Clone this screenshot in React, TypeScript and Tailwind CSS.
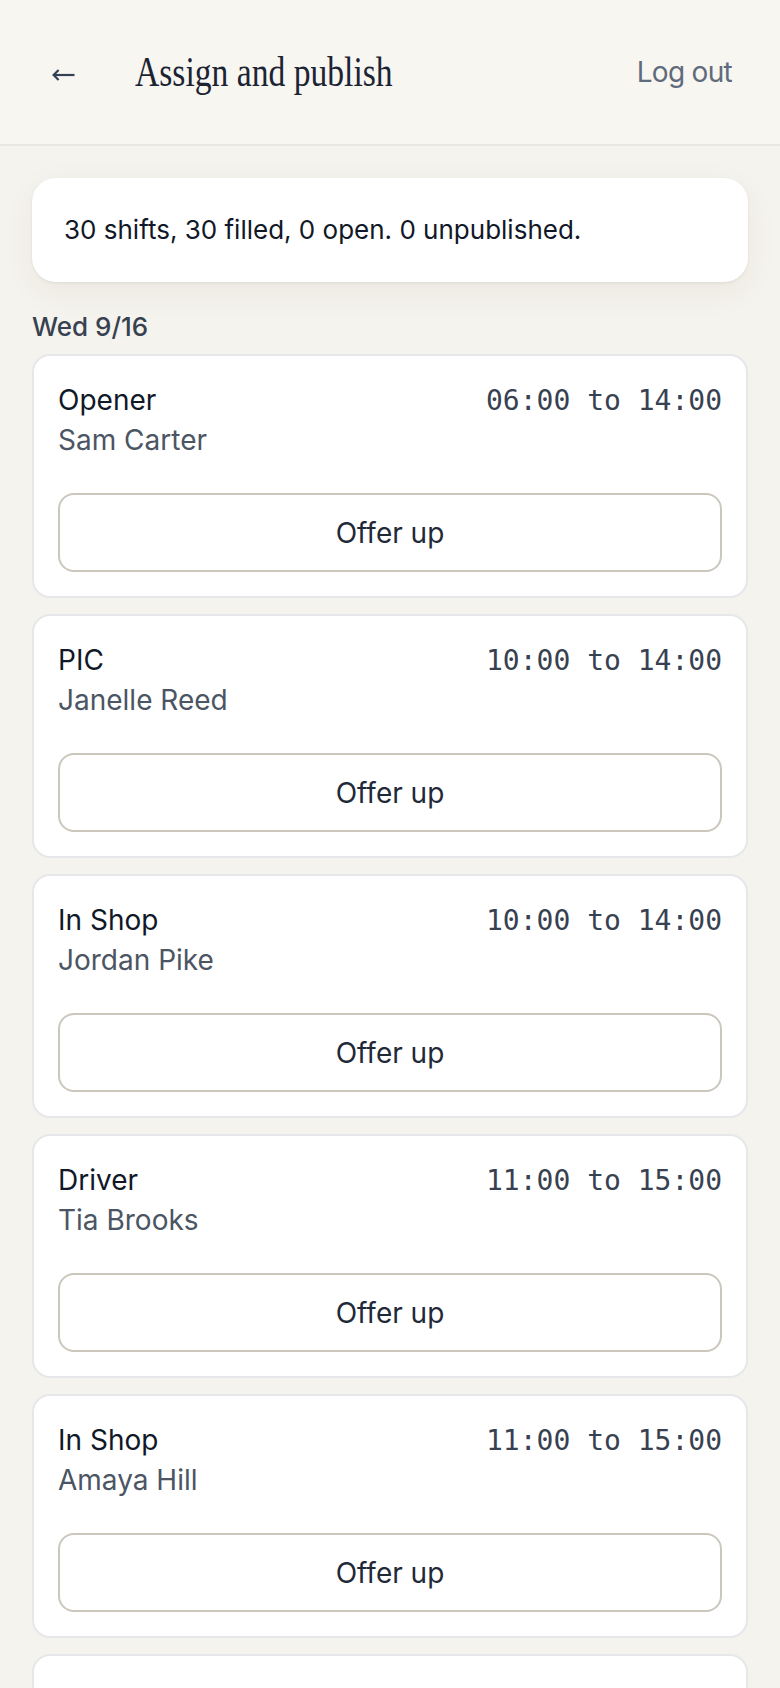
import React from "react";

type Shift = { role: string; name: string; time: string };

const shifts: Shift[] = [
  { role: "Opener", name: "Sam Carter", time: "06:00 to 14:00" },
  { role: "PIC", name: "Janelle Reed", time: "10:00 to 14:00" },
  { role: "In Shop", name: "Jordan Pike", time: "10:00 to 14:00" },
  { role: "Driver", name: "Tia Brooks", time: "11:00 to 15:00" },
  { role: "In Shop", name: "Amaya Hill", time: "11:00 to 15:00" },
];

function ShiftCard({ s }: { s: Shift }) {
  return (
    <div className="rounded-[18px] border-2 border-[#e6e7ea] bg-white p-[24px]">
      <div className="flex items-baseline justify-between">
        <div className="flex flex-col">
          <div className="text-[28px] leading-[40px] text-[#111827]">{s.role}</div>
          <div className="text-[28px] leading-[40px] text-[#4b5563]">{s.name}</div>
        </div>
        <div className="font-['DejaVu_Sans_Mono',monospace] text-[28px] leading-[40px] text-[#374151]">
          {s.time}
        </div>
      </div>
      <button className="mt-[33px] flex h-[79px] w-full items-center justify-center rounded-[16px] border-2 border-[#cbc7bc] bg-white text-[28px] leading-[40px] text-[#1f2937]">
        Offer up
      </button>
    </div>
  );
}

export default function App() {
  return (
    <div className="min-h-screen bg-[#f5f3ed] font-['Inter',sans-serif]">
      <header className="flex h-[146px] items-center justify-between border-b-2 border-[#e8e7e3] bg-[#f8f6f0] pl-[52px] pr-[48px]">
        <div className="flex items-center">
          <svg
            width="23"
            height="14"
            viewBox="0 0 23 14"
            className="mt-[5px]"
            fill="none"
            stroke="#334155"
            strokeWidth="2.2"
            strokeLinecap="butt"
            strokeLinejoin="miter"
          >
            <path d="M22.5 7H1.8" />
            <path d="M6.6 2L1.6 7L6.6 12" />
          </svg>
          <h1 className="ml-[60px] origin-left scale-x-[0.8] whitespace-nowrap font-['Liberation_Serif',serif] text-[42px] font-normal leading-[42px] text-[#1c2434]">
            Assign and publish
          </h1>
        </div>
        <button className="text-[28px] leading-[40px] tracking-[-0.025em] text-[#5f6b7c]">Log out</button>
      </header>

      <main className="px-[32px] pt-[32px] pb-[40px]">
        <div className="rounded-[24px] bg-white px-[32px] py-[32px] text-[26px] leading-[40px] text-[#111827] shadow-[0_1px_3px_rgba(0,0,0,0.07),0_10px_32px_rgba(60,50,30,0.06)]">
          30 shifts, 30 filled, 0 open. 0 unpublished.
        </div>

        <div className="mt-[25px] mb-[7px] text-[26px] font-medium leading-[40px] text-[#374151]">
          Wed 9/16
        </div>

        <div className="flex flex-col gap-[16px]">
          {shifts.map((s, i) => (
            <ShiftCard key={i} s={s} />
          ))}
          <div className="h-[244px] rounded-[18px] border-2 border-[#e6e7ea] bg-white" />
        </div>
      </main>
    </div>
  );
}
